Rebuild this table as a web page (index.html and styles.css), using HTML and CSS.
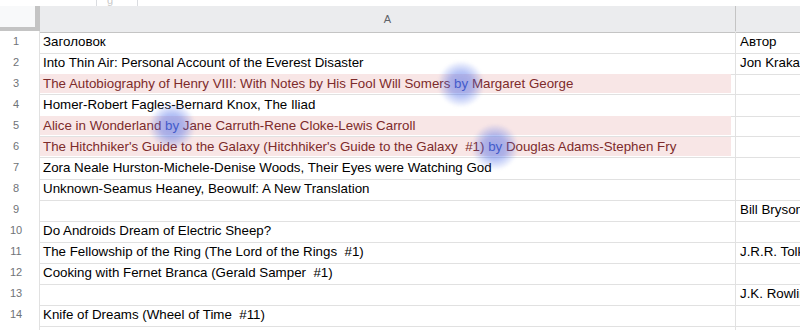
FILE: index.html
```html
<!DOCTYPE html>
<html lang="ru">
<head>
<meta charset="utf-8"/>
<meta content="width=device-width, initial-scale=1.0" name="viewport"/>
<title>Книги – Таблица</title>
<link rel="stylesheet" href="styles.css">
</head>
<body>
<div class="toolbar">
  <div class="namebox">g</div>
</div>
<div class="sheet">
  <div class="row head">
    <div class="corner"></div>
    <div class="colname">A</div>
    <div class="colname"></div>
  </div>
  <div class="row"><div class="num">1</div><div class="cell">Заголовок</div><div class="cell">Автор</div></div>
  <div class="row"><div class="num">2</div><div class="cell">Into Thin Air: Personal Account of the Everest Disaster</div><div class="cell">Jon Krakauer</div></div>
  <div class="row"><div class="num">3</div><div class="cell"><div class="flag">The Autobiography of Henry VIII: With Notes by His Fool Will Somers <span class="hit">by</span> Margaret George</div></div><div class="cell"></div></div>
  <div class="row"><div class="num">4</div><div class="cell">Homer-Robert Fagles-Bernard Knox, The Iliad</div><div class="cell"></div></div>
  <div class="row"><div class="num">5</div><div class="cell"><div class="flag">Alice in Wonderland <span class="hit">by</span> Jane Carruth-Rene Cloke-Lewis Carroll</div></div><div class="cell"></div></div>
  <div class="row"><div class="num">6</div><div class="cell"><div class="flag">The Hitchhiker's Guide to the Galaxy (Hitchhiker's Guide to the Galaxy  #1) <span class="hit">by</span> Douglas Adams-Stephen Fry</div></div><div class="cell"></div></div>
  <div class="row"><div class="num">7</div><div class="cell">Zora Neale Hurston-Michele-Denise Woods, Their Eyes were Watching God</div><div class="cell"></div></div>
  <div class="row"><div class="num">8</div><div class="cell">Unknown-Seamus Heaney, Beowulf: A New Translation</div><div class="cell"></div></div>
  <div class="row"><div class="num">9</div><div class="cell"></div><div class="cell">Bill Bryson</div></div>
  <div class="row"><div class="num">10</div><div class="cell">Do Androids Dream of Electric Sheep?</div><div class="cell"></div></div>
  <div class="row"><div class="num">11</div><div class="cell">The Fellowship of the Ring (The Lord of the Rings  #1)</div><div class="cell">J.R.R. Tolkien</div></div>
  <div class="row"><div class="num">12</div><div class="cell">Cooking with Fernet Branca (Gerald Samper  #1)</div><div class="cell"></div></div>
  <div class="row"><div class="num">13</div><div class="cell"></div><div class="cell">J.K. Rowling</div></div>
  <div class="row"><div class="num">14</div><div class="cell">Knife of Dreams (Wheel of Time  #11)</div><div class="cell"></div></div>
  <div class="row"><div class="num">15</div><div class="cell"></div><div class="cell"></div></div>
</div>
</body>
</html>
```

FILE: styles.css
```css
body {
  margin: 0;
  font-family: 'Liberation Sans', Arial, sans-serif;
  background: #fff;
  color: #000;
  overflow: hidden;
}
.toolbar {
  height: 6px;
  display: flex;
}
.namebox {
  margin-left: 96px;
  width: 42px;
  height: 6px;
  border-left: 1px solid #dadce0;
  border-right: 1px solid #dadce0;
  font-size: 11px;
  line-height: 0;
  color: #c8c8c8;
  padding-left: 10px;
  box-sizing: border-box;
  overflow: hidden;
}
.sheet {
  width: 1000px;
}
.row {
  display: grid;
  grid-template-columns: 40px 696px 1fr;
  height: 21px;
}
.row > div {
  border-right: 1px solid #e1e1e1;
  border-bottom: 1px solid #e1e1e1;
  box-sizing: border-box;
  white-space: pre;
  overflow: visible;
}
.row.head {
  height: 25px;
}
.row.head > div {
  border-bottom-color: #c4c4c4;
  background: #ebecee;
}
.row.head .corner {
  background: #f8f9fa;
  border-right: 5px solid #c4c4c4;
  border-bottom: 4px solid #c4c4c4;
  height: 25px;
}
.colname {
  font-size: 11px;
  color: #5f6368;
  text-align: center;
  line-height: 26px;
  border-right-color: #c4c4c4 !important;
}
.num {
  background: #fff;
  font-size: 11px;
  color: #6f7377;
  text-align: center;
  padding-right: 7px;
  line-height: 21px;
}
.cell {
  font-size: 13.33px;
  line-height: 22px;
  padding-left: 3px;
}
.cell:last-child {
  padding-left: 4px;
}
.flag {
  background: #f8e6e6;
  color: #7d2b2b;
  margin: 1px 4px 0 -3px;
  padding-left: 3px;
  height: 19px;
  line-height: 20px;
}
/* cursor spotlight on the matched word */
.hit {
  position: relative;
  color: #4050b0;
}
.hit::after {
  content: "";
  position: absolute;
  left: 50%;
  top: 50%;
  width: 46px;
  height: 46px;
  margin: -23px 0 0 -23px;
  border-radius: 50%;
  background: radial-gradient(circle, rgba(72, 104, 232, 0.5) 0%, rgba(72, 104, 232, 0.42) 35%, rgba(72, 104, 232, 0) 72%);
  filter: blur(1.5px);
}
```
